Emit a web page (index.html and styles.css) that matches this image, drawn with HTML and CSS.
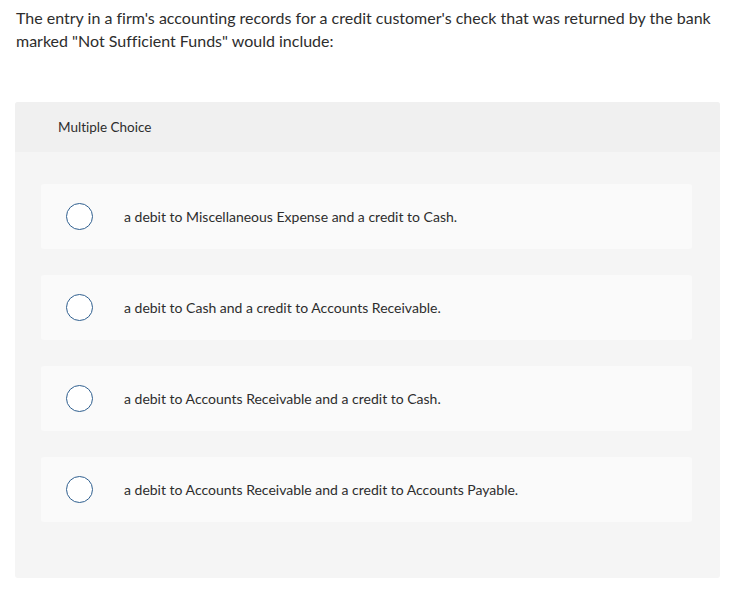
FILE: index.html
```html
<!DOCTYPE html>
<html>
<head>
<meta charset="utf-8">
<link rel="stylesheet" href="styles.css">
</head>
<body>
<div class="page">
  <p class="question">The entry in a firm's accounting records for a credit customer's check that was returned by the bank marked "Not Sufficient Funds" would include:</p>
  <div class="panel">
    <div class="panel-head">Multiple Choice</div>
    <div class="panel-body">
      <div class="option"><span class="radio"></span><span class="label">a debit to Miscellaneous Expense and a credit to Cash.</span></div>
      <div class="option"><span class="radio"></span><span class="label">a debit to Cash and a credit to Accounts Receivable.</span></div>
      <div class="option"><span class="radio"></span><span class="label">a debit to Accounts Receivable and a credit to Cash.</span></div>
      <div class="option"><span class="radio"></span><span class="label">a debit to Accounts Receivable and a credit to Accounts Payable.</span></div>
    </div>
  </div>
</div>
</body>
</html>
```

FILE: styles.css
```css
html, body {
  margin: 0;
  padding: 0;
  background: #ffffff;
}
body {
  font-family: Lato, "Open Sans", "Liberation Sans", sans-serif;
  color: #2d2d2d;
  font-variant-ligatures: none;
}
.page {
  padding: 6px 36px 0 15px;
}
.question {
  margin: 0 0 50px 1px;
  font-size: 16px;
  line-height: 23px;
}
.panel {
  border-radius: 3px;
  overflow: hidden;
  background: #f5f5f5;
}
.panel-head {
  background: #f0f0f0;
  height: 50px;
  display: flex;
  align-items: center;
  padding-left: 43px;
  font-size: 13.5px;
}
.panel-body {
  padding: 32px 28px 56px 26px;
  display: flex;
  flex-direction: column;
  gap: 26px;
}
.option {
  height: 65px;
  background: #fafafa;
  border-radius: 3px;
  display: flex;
  align-items: center;
}
.radio {
  width: 25px;
  height: 25px;
  border: 1.5px solid #2f5f8f;
  border-radius: 50%;
  margin-left: 25px;
  flex: none;
  background: #ffffff;
}
.label {
  margin-left: 31px;
  font-size: 14px;
}
```
